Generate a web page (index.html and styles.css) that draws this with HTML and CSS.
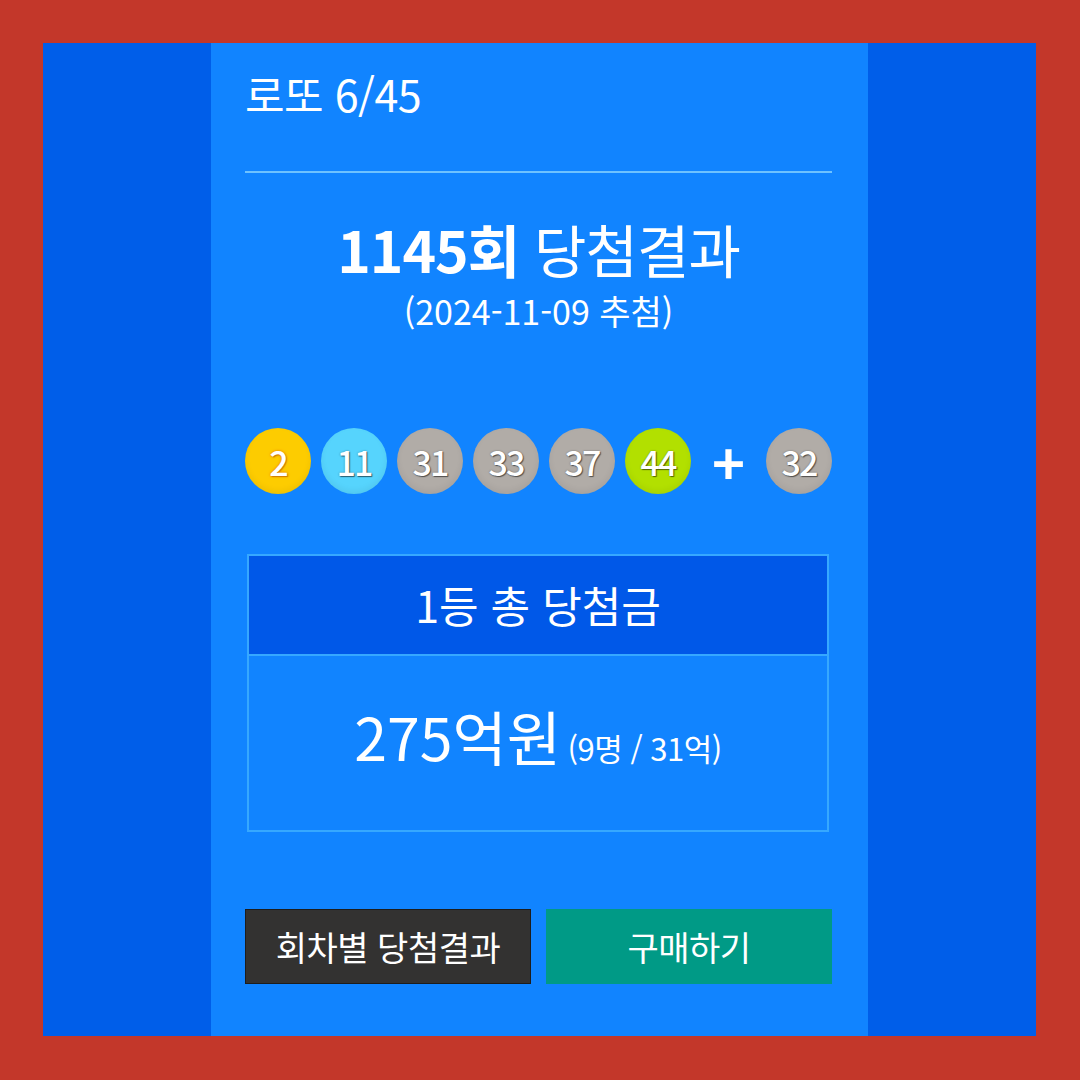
FILE: index.html
```html
<!DOCTYPE html>
<html lang="ko">
<head>
    <meta charset="UTF-8">
    <meta name="viewport" content="width=device-width, initial-scale=1.0">
    <title>로또 6/45 당첨결과</title>
    <link rel="stylesheet" href="styles.css">
</head>
<body>
    <div class="frame">
        <div class="stage">
            <section class="lotto">
                <h1 class="brand">로또 6/45</h1>

                <div class="round">
                    <h2 class="round-title"><strong>1145회</strong> 당첨결과</h2>
                    <p class="round-date">(2024-11-09 추첨)</p>
                </div>

                <!-- 당첨번호 + 보너스 -->
                <div class="balls">
                    <span class="ball ball-yellow">2</span>
                    <span class="ball ball-blue">11</span>
                    <span class="ball ball-gray">31</span>
                    <span class="ball ball-gray">33</span>
                    <span class="ball ball-gray">37</span>
                    <span class="ball ball-green">44</span>
                    <span class="plus">+</span>
                    <span class="ball ball-gray">32</span>
                </div>

                <div class="prize">
                    <div class="prize-head">1등 총 당첨금</div>
                    <div class="prize-body">
                        <span class="prize-total">275억원</span>
                        <span class="prize-detail">(9명 / 31억)</span>
                    </div>
                </div>

                <div class="actions">
                    <a href="#" class="btn btn-history">회차별 당첨결과</a>
                    <a href="#" class="btn btn-buy">구매하기</a>
                </div>
            </section>
        </div>
    </div>
</body>
</html>
```

FILE: styles.css
```css
* {
    box-sizing: border-box;
}
body {
    margin: 0;
    font-family: "Noto Sans CJK KR", "Noto Sans", sans-serif;
    color: #fff;
}
.frame {
    width: 1080px;
    height: 1080px;
    padding: 43px 44px 44px 43px;
    background: #c3372a;
}
.stage {
    height: 100%;
    display: flex;
    justify-content: center;
    background: #005ee9;
}
.lotto {
    width: 657px;
    padding: 0 36px 0 34px;
    background: #1184ff;
}
.brand {
    margin: 0;
    padding: 20px 0 48px;
    font-size: 43px;
    font-weight: normal;
    line-height: 60px;
    letter-spacing: -0.5px;
    border-bottom: 2px solid #6ec2ff;
}
.round {
    text-align: center;
}
.round-title {
    margin: 40px 0 0;
    font-size: 57px;
    font-weight: normal;
    line-height: 70px;
    letter-spacing: -1px;
}
.round-title strong {
    font-weight: bold;
}
.round-date {
    margin: 6px 0 0;
    font-size: 34px;
    line-height: 44px;
}
.balls {
    display: flex;
    align-items: center;
    margin-top: 95px;
    gap: 10px;
}
.ball {
    flex: 0 0 66px;
    height: 66px;
    border-radius: 50%;
    display: flex;
    align-items: center;
    justify-content: center;
    font-size: 34px;
    font-weight: 500;
    letter-spacing: -2px;
    text-shadow: 1px 1px 1px rgba(0, 0, 0, 0.5), 0 0 2px rgba(0, 0, 0, 0.35);
    box-shadow: inset 0 -3px 6px rgba(0, 0, 0, 0.06);
}
.ball-yellow {
    background: #fdcc00;
    text-shadow: 0 0 3px #e87400, 1px 1px 1px rgba(140, 60, 0, 0.5);
}
.ball-blue {
    background: #56d4fd;
}
.ball-gray {
    background: #b1aca7;
}
.ball-green {
    background: #b2e000;
}
.plus {
    flex: 1;
    text-align: center;
    font-size: 56px;
    font-weight: bold;
    line-height: 66px;
}
.prize {
    margin: 60px 3px 0 2px;
    border: 2px solid #36a8ff;
    text-align: center;
}
.prize-head {
    height: 100px;
    line-height: 96px;
    background: #0058e8;
    border-bottom: 2px solid #36a8ff;
    font-size: 43px;
}
.prize-body {
    height: 174px;
    padding-top: 45px;
    line-height: 70px;
}
.prize-total {
    font-size: 59px;
}
.prize-detail {
    margin-left: 2px;
    font-size: 31px;
    letter-spacing: -0.5px;
}
.actions {
    display: flex;
    gap: 15px;
    margin-top: 77px;
}
.btn {
    flex: 1;
    height: 75px;
    line-height: 73px;
    text-align: center;
    color: #fff;
    text-decoration: none;
    font-size: 34px;
    letter-spacing: -0.5px;
}
.btn-history {
    background: #333231;
    border: 1px solid #1d1d1d;
}
.btn-buy {
    background: #009a86;
    border: 1px solid #009a86;
}
```
